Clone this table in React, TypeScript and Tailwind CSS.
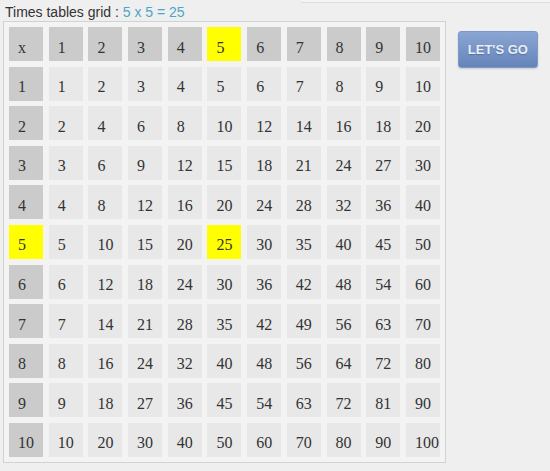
import React from 'react';

const nums = [1, 2, 3, 4, 5, 6, 7, 8, 9, 10];
const pick = 5;

function Cell({ label, head, hot }: { label: string | number; head?: boolean; hot?: boolean }) {
  const bg = hot ? 'bg-[#ffff00]' : head ? 'bg-[#cbcbcb]' : 'bg-[#e8e8e8]';
  return (
    <div className={`${bg} w-[34px] h-[34px] pl-[9px] pt-[7px] flex items-center text-[16px] text-[#333] font-['Liberation_Serif',serif]`}>
      {label}
    </div>
  );
}

export default function App() {
  return (
    <div className="min-h-screen bg-[#efefef] font-['Liberation_Sans',Arial,sans-serif]">
      <div className="h-[3px] ml-[301px] bg-[#f4f4f4] border-b border-[#dcdcdc]" />
      <div className="h-[18px] leading-[18px] pl-[5px] text-[14px] text-[#333]">
        Times tables grid : <span className="text-[#4aa6c6]">5 x 5 = 25</span>
      </div>
      <div className="flex items-start">
        <div className="ml-[3px] border border-[#d2d2d2] bg-[#f3f3f3] p-[5px]">
          <div className="grid grid-cols-[repeat(11,34px)] gap-x-[5.7px] gap-y-[5.6px]">
            <Cell label="x" head />
            {nums.map((n) => (
              <Cell key={'h' + n} label={n} head hot={n === pick} />
            ))}
            {nums.map((r) => (
              <React.Fragment key={'r' + r}>
                <Cell label={r} head hot={r === pick} />
                {nums.map((c) => (
                  <Cell key={r + '-' + c} label={r * c} hot={r === pick && c === pick} />
                ))}
              </React.Fragment>
            ))}
          </div>
        </div>
        <button className="ml-[12px] mt-[10px] w-[80px] h-[37px] rounded-[3px] border border-[#7c98c9] bg-gradient-to-b from-[#8aa6d3] to-[#6584ba] text-[13px] font-bold text-[#e9eef7] [text-shadow:0_1px_1px_rgba(40,60,100,0.35)] shadow-[0_1px_2px_rgba(0,0,0,0.15)]">
          LET'S GO
        </button>
      </div>
    </div>
  );
}
